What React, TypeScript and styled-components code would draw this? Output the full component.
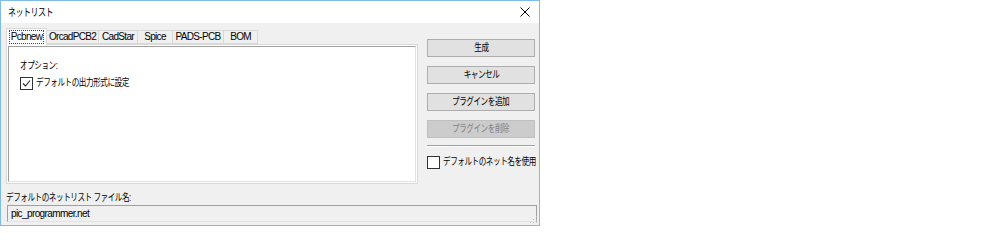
import React from "react";
import styled, { createGlobalStyle } from "styled-components";

const GlobalStyle = createGlobalStyle`
  html, body {
    margin: 0;
    padding: 0;
    background: #ffffff;
  }
  body {
    font-family: "Liberation Sans", "Noto Sans CJK JP", sans-serif;
    font-size: 10px;
    letter-spacing: -0.6px;
    color: #000;
  }
`;

// Japanese UI text in the reference uses a narrow face (Meiryo UI); squeeze the CJK fallback to match
const Jp = styled.span<{ $center?: boolean }>`
  display: inline-block;
  flex-shrink: 0;
  white-space: nowrap;
  transform: scaleX(0.76);
  transform-origin: ${(p) => (p.$center ? "center" : "left")} center;
`;

const Window = styled.div`
  width: 540px;
  height: 226px;
  box-sizing: border-box;
  border: 1px solid #7fbbe6;
  background: #f0f0f0;
  display: flex;
  flex-direction: column;
  overflow: hidden;
  position: relative;
`;

const TitleBar = styled.div`
  height: 22px;
  background: #ffffff;
  display: flex;
  align-items: center;
  justify-content: space-between;
  padding: 0 8px 0 7px;
  flex-shrink: 0;
`;

const Title = styled.span`
  line-height: 14px;
  font-size: 10.5px;
`;

const CloseButton = styled.div`
  width: 12px;
  height: 12px;
  display: flex;
  align-items: center;
  justify-content: center;
`;

const Body = styled.div`
  flex: 1;
  padding: 5px 3px 0 5px;
  display: flex;
  flex-direction: column;
`;

const MainRow = styled.div`
  display: flex;
  align-items: flex-start;
`;

const TabArea = styled.div`
  width: 412px;
  display: flex;
  flex-direction: column;
`;

const TabStrip = styled.div`
  display: flex;
  align-items: flex-end;
  height: 16px;
  position: relative;
  z-index: 1;
`;

const Tab = styled.div<{ $w: number; $active?: boolean }>`
  width: ${(p) => p.$w}px;
  height: ${(p) => (p.$active ? 17 : 14)}px;
  box-sizing: border-box;
  border: 1px solid #d9d9d9;
  border-left-width: ${(p) => (p.$active ? 1 : 0)}px;
  border-bottom: ${(p) => (p.$active ? "none" : "1px solid #d9d9d9")};
  background: ${(p) => (p.$active ? "#ffffff" : "#f0f0f0")};
  margin-bottom: ${(p) => (p.$active ? -1 : 0)}px;
  display: flex;
  align-items: center;
  justify-content: center;
  line-height: 12px;
  letter-spacing: -0.7px;
  white-space: nowrap;
`;

const FocusText = styled.span`
  outline: 1px dotted #444;
  padding: 0 1px;
  line-height: 12px;
`;

const TabPanel = styled.div`
  height: 140px;
  box-sizing: border-box;
  border: 1px solid #d9d9d9;
  background: #ffffff;
  padding: 1px;
`;

const SunkenBox = styled.div`
  height: 100%;
  box-sizing: border-box;
  border-top: 1px solid #a0a0a0;
  border-left: 1px solid #a0a0a0;
  border-right: 1px solid #e3e3e3;
  border-bottom: 1px solid #e3e3e3;
  padding: 12px 0 0 11px;
  display: flex;
  flex-direction: column;
  gap: 3px;
`;

const Label = styled.div`
  line-height: 14px;
  white-space: nowrap;
`;

const CheckRow = styled.label`
  display: flex;
  align-items: center;
  gap: 3px;
  line-height: 14px;
  white-space: nowrap;
`;

const Box = styled.span`
  width: 13px;
  height: 13px;
  box-sizing: border-box;
  border: 1px solid #333333;
  background: #ffffff;
  display: flex;
  align-items: center;
  justify-content: center;
  flex-shrink: 0;
`;

const ButtonColumn = styled.div`
  width: 108px;
  margin-left: 9px;
  padding-top: 11px;
  display: flex;
  flex-direction: column;
  gap: 9px;
`;

const Button = styled.div<{ $disabled?: boolean }>`
  height: 18px;
  box-sizing: border-box;
  border: 1px solid ${(p) => (p.$disabled ? "#bfbfbf" : "#adadad")};
  background: ${(p) => (p.$disabled ? "#cccccc" : "#e1e1e1")};
  color: ${(p) => (p.$disabled ? "#838383" : "#000")};
  display: flex;
  align-items: center;
  justify-content: center;
  line-height: 14px;
`;

const Separator = styled.div`
  height: 1px;
  background: #a0a0a0;
  border-bottom: 1px solid #ffffff;
  margin-top: -2px;
`;

const SideCheck = styled(CheckRow)`
  margin-top: -1px;
`;

const FileLabel = styled(Label)`
  margin-top: 7px;
`;

const FileInput = styled.div`
  width: 530px;
  height: 17px;
  box-sizing: border-box;
  border-top: 1px solid #a0a0a0;
  border-left: 1px solid #a0a0a0;
  border-right: 1px solid #a0a0a0;
  border-bottom: 1px solid #e3e3e3;
  background: #f0f0f0;
  padding-left: 3px;
  display: flex;
  align-items: center;
  line-height: 14px;
  margin-left: 1px;
`;

const Grip = styled.svg`
  position: absolute;
  right: 1px;
  bottom: 1px;
`;

const tabs = [
  { name: "Pcbnew", w: 41 },
  { name: "OrcadPCB2", w: 52 },
  { name: "CadStar", w: 39 },
  { name: "Spice", w: 35 },
  { name: "PADS-PCB", w: 51 },
  { name: "BOM", w: 34 },
];

export default function App() {
  return (
    <>
      <GlobalStyle />
      <Window>
        <TitleBar>
          <Title>
            <Jp>ネットリスト</Jp>
          </Title>
          <CloseButton>
            <svg width="10" height="10" viewBox="0 0 10 10">
              <path d="M0.5 0.5 L9.5 9.5 M9.5 0.5 L0.5 9.5" stroke="#000" strokeWidth="1" />
            </svg>
          </CloseButton>
        </TitleBar>
        <Body>
          <MainRow>
            <TabArea>
              <TabStrip>
                {tabs.map((t, i) => (
                  <Tab key={t.name} $w={t.w} $active={i === 0}>
                    {i === 0 ? <FocusText>{t.name}</FocusText> : t.name}
                  </Tab>
                ))}
              </TabStrip>
              <TabPanel>
                <SunkenBox>
                  <Label>
                    <Jp>オプション:</Jp>
                  </Label>
                  <CheckRow>
                    <Box>
                      <svg width="9" height="9" viewBox="0 0 9 9">
                        <path d="M1 4.5 L3.5 7 L8 1.5" fill="none" stroke="#222" strokeWidth="1.1" />
                      </svg>
                    </Box>
                    <Jp>デフォルトの出力形式に設定</Jp>
                  </CheckRow>
                </SunkenBox>
              </TabPanel>
            </TabArea>
            <ButtonColumn>
              <Button>
                <Jp $center>生成</Jp>
              </Button>
              <Button>
                <Jp $center>キャンセル</Jp>
              </Button>
              <Button>
                <Jp $center>プラグインを追加</Jp>
              </Button>
              <Button $disabled>
                <Jp $center>プラグインを削除</Jp>
              </Button>
              <Separator />
              <SideCheck>
                <Box />
                <Jp>デフォルトのネット名を使用</Jp>
              </SideCheck>
            </ButtonColumn>
          </MainRow>
          <FileLabel>
            <Jp>デフォルトのネットリスト ファイル名:</Jp>
          </FileLabel>
          <FileInput>pic_programmer.net</FileInput>
        </Body>
        <Grip width="8" height="8" viewBox="0 0 8 8">
          <rect x="6" y="0" width="1" height="1" fill="#bcbcbc" />
          <rect x="3" y="3" width="1" height="1" fill="#bcbcbc" />
          <rect x="6" y="3" width="1" height="1" fill="#bcbcbc" />
          <rect x="0" y="6" width="1" height="1" fill="#bcbcbc" />
          <rect x="3" y="6" width="1" height="1" fill="#bcbcbc" />
          <rect x="6" y="6" width="1" height="1" fill="#bcbcbc" />
        </Grip>
      </Window>
    </>
  );
}
